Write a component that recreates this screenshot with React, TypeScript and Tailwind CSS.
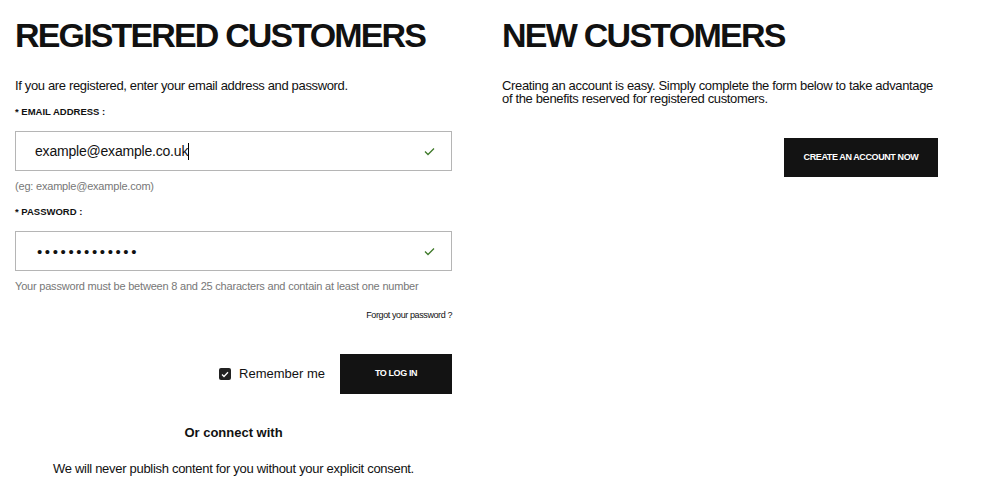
import React from "react";

const font = { fontFamily: '"Liberation Sans", Arial, sans-serif' };

function Check() {
  return (
    <svg width="11" height="9" viewBox="0 0 11 9" fill="none">
      <path d="M1 4.5 L4 7.5 L10 1.5" stroke="#3f7a2a" strokeWidth="1.3" />
    </svg>
  );
}

export default function App() {
  return (
    <div className="w-[1007px] h-[490px] bg-white text-[#111] overflow-hidden" style={font}>
      <div className="flex gap-[50px] pl-[15px] pt-[18px]">
        {/* Left */}
        <div className="w-[437px] flex flex-col">
          <h1 className="text-[34px] leading-[34px] font-bold tracking-[-1.85px] whitespace-nowrap h-[34px]">REGISTERED CUSTOMERS</h1>
          <p className="mt-[26px] text-[13px] leading-[16px] tracking-[-0.35px]">If you are registered, enter your email address and password.</p>
          <label className="mt-[12px] text-[9.5px] leading-[12px] font-bold">* EMAIL ADDRESS :</label>
          <div className="mt-[13px] h-[40px] border border-[#b5b5b5] flex items-center justify-between pl-[19px] pr-[16px]">
            <span className="text-[14px] tracking-[-0.2px]">example@example.co.uk<span className="inline-block w-[1px] h-[17px] bg-black align-middle" /></span>
            <Check />
          </div>
          <p className="mt-[8px] text-[11px] leading-[14px] text-[#777] tracking-[-0.2px]">(eg: example@example.com)</p>
          <label className="mt-[13px] text-[9.5px] leading-[12px] font-bold">* PASSWORD :</label>
          <div className="mt-[13px] h-[40px] border border-[#b5b5b5] flex items-center justify-between pl-[21px] pr-[16px]">
            <span className="text-[15px] tracking-[2.6px] leading-[15px]">•••••••••••••</span>
            <Check />
          </div>
          <p className="mt-[8px] text-[11px] leading-[14px] text-[#777] tracking-[-0.2px]">Your password must be between 8 and 25 characters and contain at least one number</p>
          <p className="mt-[16px] self-end text-[9px] leading-[12px] tracking-[-0.4px]">Forgot your password ?</p>
          <div className="mt-[33px] flex items-center justify-end">
            <div className="flex items-center gap-[8px] mr-[15px]">
              <span className="w-[12px] h-[12px] rounded-[2px] bg-[#222] flex items-center justify-center">
                <svg width="8" height="7" viewBox="0 0 8 7" fill="none"><path d="M1 3.5 L3 5.5 L7 1.3" stroke="white" strokeWidth="1.3" /></svg>
              </span>
              <span className="text-[13px]">Remember me</span>
            </div>
            <button className="w-[112px] h-[40px] bg-[#131313] text-white text-[9px] font-bold tracking-[-0.4px]">TO LOG IN</button>
          </div>
          <p className="mt-[31px] text-center text-[13px] font-bold leading-[16px]">Or connect with</p>
          <p className="mt-[20px] text-center text-[13px] leading-[16px] tracking-[-0.3px]">We will never publish content for you without your explicit consent.</p>
        </div>
        {/* Right */}
        <div className="w-[436px] flex flex-col">
          <h1 className="text-[34px] leading-[34px] font-bold tracking-[-1.75px] whitespace-nowrap h-[34px]">NEW CUSTOMERS</h1>
          <p className="mt-[27px] text-[13px] leading-[13px] tracking-[-0.35px]">Creating an account is easy. Simply complete the form below to take advantage of the benefits reserved for registered customers.</p>
          <div className="mt-[33px] flex justify-end">
            <button className="w-[154px] h-[39px] bg-[#131313] text-white text-[9px] font-bold tracking-[-0.4px]">CREATE AN ACCOUNT NOW</button>
          </div>
        </div>
      </div>
    </div>
  );
}
